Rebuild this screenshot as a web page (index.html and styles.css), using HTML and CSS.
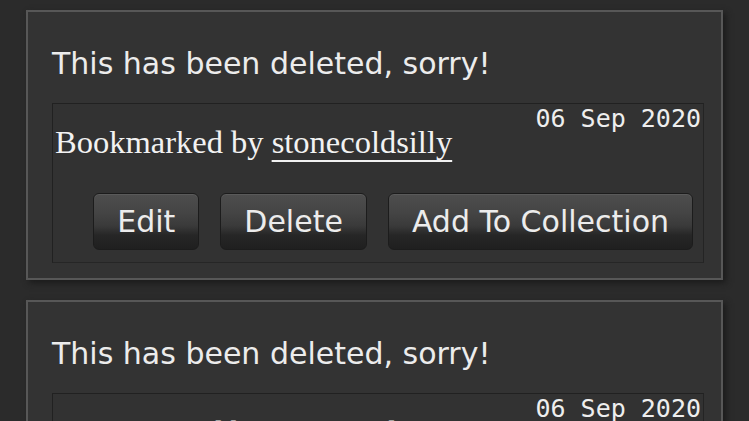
FILE: index.html
```html
<!DOCTYPE html>
<html lang="en">
<head>
<meta charset="utf-8">
<title>Bookmarks</title>
<link rel="stylesheet" href="styles.css">
</head>
<body>
<ol class="bookmarks">
  <li class="card">
    <h4 class="heading">This has been deleted, sorry!</h4>
    <div class="meta">
      <div class="meta-top">
        <p class="date">06 Sep 2020</p>
        <p class="byline">Bookmarked by <a href="#">stonecoldsilly</a></p>
      </div>
      <ul class="actions">
        <li><a class="btn" href="#">Edit</a></li>
        <li><a class="btn" href="#">Delete</a></li>
        <li><a class="btn" href="#">Add To Collection</a></li>
      </ul>
    </div>
  </li>
  <li class="card">
    <h4 class="heading">This has been deleted, sorry!</h4>
    <div class="meta">
      <div class="meta-top">
        <p class="date">06 Sep 2020</p>
        <p class="byline">Bookmarked by <a href="#">stonecoldsilly</a></p>
      </div>
      <ul class="actions">
        <li><a class="btn" href="#">Edit</a></li>
        <li><a class="btn" href="#">Delete</a></li>
        <li><a class="btn" href="#">Add To Collection</a></li>
      </ul>
    </div>
  </li>
</ol>
</body>
</html>
```
FILE: styles.css
```css
html, body {
  margin: 0;
  padding: 0;
  background: #2b2b2b;
  color: #e8e8e8;
  font-family: "DejaVu Sans", Verdana, sans-serif;
}

.bookmarks {
  list-style: none;
  margin: 0;
  padding: 10px 26px 0 26px;
  display: flex;
  flex-direction: column;
  gap: 20px;
}

.card {
  background: #333333;
  border: 2px solid #575757;
  box-shadow: 3px 3px 6px #1b1b1b;
  padding: 34px 17px 15px 24px;
}

.heading {
  margin: 0 0 21px 0;
  font-size: 30px;
  line-height: 36px;
  font-weight: normal;
  color: #ececec;
}

.meta {
  border: 1px solid #212121;
  border-right-color: #242424;
  border-bottom-color: #262626;
  background: #323232;
  padding: 0 0 12px 2px;
}

.meta-top {
  display: grid;
}

.date {
  grid-area: 1 / 1;
  justify-self: end;
  align-self: start;
  margin: 1px 2px 0 0;
  font-family: "DejaVu Sans Mono", monospace;
  font-size: 25px;
  line-height: 28px;
  color: #eeeeee;
}

.byline {
  grid-area: 1 / 1;
  margin: 20px 0 0 0;
  font-family: "Liberation Serif", Georgia, serif;
  font-size: 32.5px;
  line-height: 36px;
  color: #f2f2f2;
}

.byline a {
  color: #f2f2f2;
  text-decoration: underline;
  text-decoration-thickness: 2px;
  text-underline-offset: 7px;
}

.actions {
  list-style: none;
  margin: 33px 10px 0 0;
  padding: 0;
  display: flex;
  justify-content: flex-end;
  gap: 21px;
}

.btn {
  display: block;
  padding: 9px 23px;
  font-size: 30px;
  line-height: 37px;
  color: #ececec;
  text-decoration: none;
  border: 1px solid #1c1c1c;
  border-radius: 6px;
  background: linear-gradient(to bottom, #4e4e4e 0%, #444444 35%, #3a3a3a 58%, #262626 75%, #1f1f1f 100%);
  box-shadow: inset 0 1px 0 #5a5a5a;
}
```
